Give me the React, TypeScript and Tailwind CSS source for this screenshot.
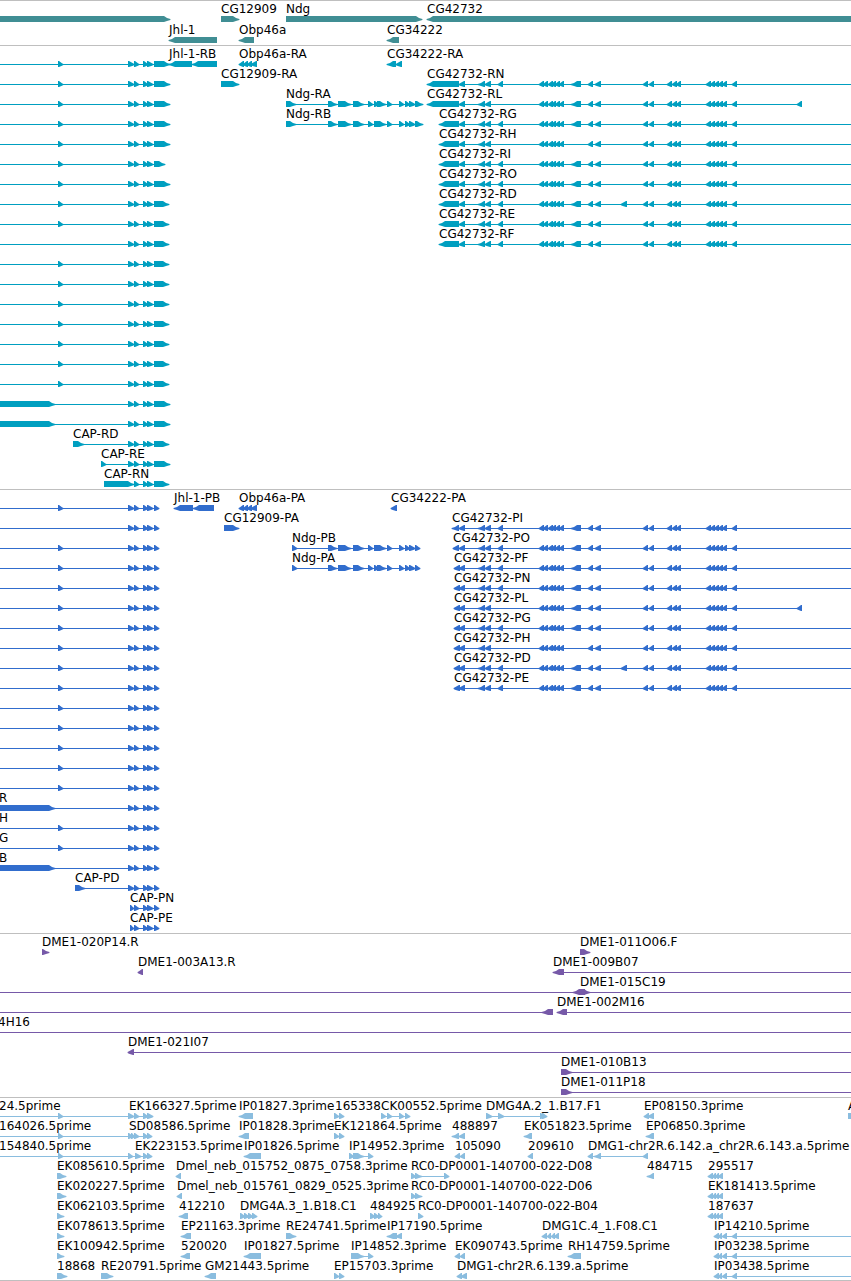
type Strand = '+' | '-';
type Span = [number, number];

interface Feature {
  strand: Strand;
  exons: Span[];
  line?: Span;
  label?: string;
  at?: number;
}

// Past the right border of the view; anything ending here runs on to the window's edge.
const FAR = 5000;

const fwd = (label: string, exons: Span[], line?: Span, at?: number): Feature => ({ strand: '+', label, exons, line, at });
const rev = (label: string, exons: Span[], line?: Span, at?: number): Feature => ({ strand: '-', label, exons, line, at });
const through = (exons: Span[]): Span => [exons[0][0], exons[exons.length - 1][1]];

/* ---------- CAP ---------- */
const capCore: Span[] = [[128, 134], [134, 139], [143, 148], [147, 153]];
const capUpstream: Span = [58, 63];

const capTranscript = (end: number, first: Span | null = capUpstream): Feature =>
  fwd('', [...(first ? [first] : []), ...capCore, [154, end]], [0, end]);
const capProtein = (first: Span | null = capUpstream, label = ''): Feature =>
  fwd(label, [...(first ? [first] : []), ...capCore, [154, 159]], [0, 159], -1);

/* ---------- CG42732 ---------- */
interface Variant {
  head: Span[];
  e498?: boolean;
  e571?: boolean;
  e621?: boolean;
  last?: boolean;
}
const cg42732 = (label: string, v: Variant): Feature => {
  const exons: Span[] = [
    ...v.head,
    [459, 465],
    [478, 485],
    [485, 491],
    ...(v.e498 === false ? [] : ([[498, 503]] as Span[])),
    [539, 544], [543, 548], [548, 553], [551, 556], [555, 560], [559, 564],
    ...(v.e571 === false ? [] : ([[571, 581]] as Span[])),
    [588, 593],
    [595, 601],
    ...(v.e621 ? ([[621, 627]] as Span[]) : []),
    [643, 648], [649, 654],
    [667, 672], [672, 677], [676, 681],
    [706, 711], [710, 715], [714, 719], [718, 723], [722, 727],
    [732, 737],
    ...(v.last ? ([[797, 802]] as Span[]) : []),
  ];
  return rev(label, exons, [v.head[0][0], v.last ? 802 : FAR]);
};
const long: Span[] = [[427, 459]];
const short: Span[] = [[439, 459]];
const coding: Span[] = [[454, 460]];

/* ---------- Ndg ---------- */
const ndg = (label: string, first: Span, split: boolean, end: number): Feature => {
  const exons: Span[] = [
    first,
    [328, 337], [338, 351], [353, 364], [368, 373],
    ...((split ? [[374, 379], [377, 386]] : [[374, 386]]) as Span[]),
    [387, 392], [399, 404], [405, 410], [409, 415], [415, end],
  ];
  return fwd(label, exons, through(exons));
};

const obp: Span[] = [[239, 244], [243, 248], [247, 252], [251, 257]];

const genes: Feature[][] = [
  [
    fwd('', [[-20, 170]]),
    fwd('CG12909', [[221, 239]]),
    fwd('Ndg', [[286, 422]]),
    rev('CG42732', [[427, FAR]]),
  ],
  [rev('Jhl-1', [[169, 217]]), rev('Obp46a', [[239, 254]]), rev('CG34222', [[387, 399]])],
];

const transcripts: Feature[][] = [
  [
    capTranscript(170),
    rev('Jhl-1-RB', [[169, 192], [192, 217]]),
    rev('Obp46a-RA', obp),
    rev('CG34222-RA', [[387, 396], [396, 402]]),
  ],
  [capTranscript(170), fwd('CG12909-RA', [[221, 239]]), cg42732('CG42732-RN', { head: long })],
  [capTranscript(170), ndg('Ndg-RA', [286, 296], true, 423), cg42732('CG42732-RL', { head: long, e498: false, last: true })],
  [capTranscript(170), ndg('Ndg-RB', [286, 296], false, 423), cg42732('CG42732-RG', { head: short })],
  [capTranscript(170), cg42732('CG42732-RH', { head: short, e498: false, e571: false })],
  [capTranscript(165), cg42732('CG42732-RI', { head: short })],
  [capTranscript(170), cg42732('CG42732-RO', { head: short })],
  [capTranscript(169), cg42732('CG42732-RD', { head: short, e621: true })],
  [capTranscript(169), cg42732('CG42732-RE', { head: short })],
  [capTranscript(169, null), cg42732('CG42732-RF', { head: short })],
  [capTranscript(169)],
  [capTranscript(169)],
  [capTranscript(169)],
  [capTranscript(169)],
  [capTranscript(169)],
  [capTranscript(169)],
  [capTranscript(169)],
  [capTranscript(170, [-20, 55])],
  [capTranscript(170, [-20, 55])],
  [fwd('CAP-RD', [[73, 84], ...capCore, [154, 169]], [73, 169])],
  [fwd('CAP-RE', [[101, 106], ...capCore, [154, 170]], [101, 170])],
  [fwd('CAP-RN', [[104, 134], ...capCore.slice(1), [154, 169]], [104, 169])],
];

const proteins: Feature[][] = [
  [
    capProtein(),
    rev('Jhl-1-PB', [[174, 193], [193, 214]]),
    rev('Obp46a-PA', obp),
    rev('CG34222-PA', [[391, 397]]),
  ],
  [capProtein(null), fwd('CG12909-PA', [[224, 239]]), cg42732('CG42732-PI', { head: [[452, 459]] })],
  [capProtein(), ndg('Ndg-PB', [292, 297], false, 420), cg42732('CG42732-PO', { head: [[453, 459]] })],
  [capProtein(), ndg('Ndg-PA', [292, 297], true, 420), cg42732('CG42732-PF', { head: coding })],
  [capProtein(), cg42732('CG42732-PN', { head: coding })],
  [capProtein(), cg42732('CG42732-PL', { head: coding, e498: false, last: true })],
  [capProtein(), cg42732('CG42732-PG', { head: coding })],
  [capProtein(), cg42732('CG42732-PH', { head: coding, e498: false, e571: false })],
  [capProtein(), cg42732('CG42732-PD', { head: coding, e621: true })],
  [capProtein(), cg42732('CG42732-PE', { head: coding })],
  [capProtein()],
  [capProtein()],
  [capProtein()],
  [capProtein()],
  [capProtein()],
  [capProtein([-20, 55], 'R')],
  [capProtein(capUpstream, 'H')],
  [capProtein(capUpstream, 'G')],
  [capProtein([-20, 55], 'B')],
  [fwd('CAP-PD', [[75, 85], ...capCore, [154, 159]], [75, 159])],
  [fwd('CAP-PN', [[130, 134], ...capCore.slice(1), [154, 159]], [130, 159])],
  [fwd('CAP-PE', [[130, 134], ...capCore.slice(1), [154, 159]], [130, 159])],
];

const clones: Feature[][] = [
  [fwd('DME1-020P14.R', [[42, 49]]), fwd('DME1-011O06.F', [[580, 590]])],
  [rev('DME1-003A13.R', [[138, 143]]), rev('DME1-009B07', [[553, 564]], [553, FAR])],
  [rev('', [[573, 585]], [0, 585]), fwd('DME1-015C19', [[580, 590]], [580, FAR])],
  [rev('', [[542, 553]], [0, 553]), rev('DME1-002M16', [[557, 567]], [557, FAR])],
  [fwd('4H16', [], [0, FAR], -2)],
  [rev('DME1-021I07', [[128, 134]], [128, FAR])],
  [fwd('DME1-010B13', [[561, 572]], [561, FAR])],
  [fwd('DME1-011P18', [[561, 572]], [561, FAR])],
];

const estPair: Span[] = [[334, 339], [339, 344]];
const est455: Span[] = [[455, 460], [460, 465]];
const est708: Span[] = [[708, 713], [712, 716], [715, 719], [718, 723]];
const est714: Span[] = [[714, 719], [718, 722], [722, 727], [732, 737]];
const est57: Span[] = [[57, 64]];

const ests: Feature[][] = [
  [
    fwd('24.5prime', [capUpstream], [0, 128], -1),
    fwd('EK166327.5prime', capCore, [128, 152], 129),
    rev('IP01827.3prime', [[239, 253]]),
    fwd('165338', estPair, undefined, 335),
    fwd('CK00552.5prime', [[381, 386], [387, 392], [399, 404], [405, 410]], [381, 410]),
    fwd('DMG4A.2_1.B17.F1', [[486, 492], [498, 504], [540, 545], [542, 547]], [486, 547]),
    rev('EP08150.3prime', [[644, 649], [648, 654]]),
    fwd('A', [[848, FAR]]),
  ],
  [
    fwd('164026.5prime', [capUpstream], [0, 128], -1),
    fwd('SD08586.5prime', [[128, 133], [131, 135], [134, 139], [143, 148], [147, 152]], [128, 152], 129),
    rev('IP01828.3prime', [[239, 249]]),
    fwd('EK121864.5prime', estPair),
    rev('488897', [[452, 459], [459, 465]]),
    rev('EK051823.5prime', [[524, 532]]),
    rev('EP06850.3prime', [[646, 654]]),
  ],
  [
    fwd('154840.5prime', [capUpstream, [128, 133]], [0, 135], -1),
    fwd('EK223153.5prime', [[135, 141], [143, 148], [147, 152]], [135, 152]),
    rev('IP01826.5prime', [[244, 261]]),
    fwd('IP14952.3prime', [[349, 354], [353, 364], [368, 373]], [349, 373]),
    rev('105090', est455),
    rev('209610', [[528, 533]]),
    rev('DMG1-chr2R.6.142.a_chr2R.6.143.a.5prime', [[588, 593], [594, 601], [643, 648]], [588, 648]),
  ],
  [
    fwd('EK085610.5prime', [[57, 66]]),
    rev('Dmel_neb_015752_0875_0758.3prime', [[176, 181]]),
    fwd('RC0-DP0001-140700-022-D08', [[411, 416], [415, 422], [444, 449]], [411, 449]),
    rev('484715', [[647, 654]]),
    rev('295517', est708),
  ],
  [
    fwd('EK020227.5prime', [[57, 66]]),
    rev('Dmel_neb_015761_0829_0525.3prime', [[177, 182]]),
    fwd('RC0-DP0001-140700-022-D06', [[411, 416], [415, 422]]),
    rev('EK181413.5prime', est708),
  ],
  [
    fwd('EK062103.5prime', est57),
    rev('412210', [[179, 188]]),
    fwd('DMG4A.3_1.B18.C1', [[240, 245], [244, 249], [248, 253], [252, 257]]),
    fwd('484925', [[370, 375], [374, 379], [378, 382]]),
    fwd('RC0-DP0001-140700-022-B04', [[418, 423]]),
    rev('187637', est708),
  ],
  [
    fwd('EK078613.5prime', est57),
    rev('EP21163.3prime', [[181, 191]]),
    fwd('RE24741.5prime', [[286, 296]]),
    rev('IP17190.5prime', [[387, 397], [396, 402]]),
    rev('DMG1C.4_1.F08.C1', [[542, 547], [547, 551], [551, 555], [554, 559]]),
    rev('IP14210.5prime', est714, [714, FAR]),
  ],
  [
    fwd('EK100942.5prime', est57),
    rev('520020', [[181, 190]]),
    rev('IP01827.5prime', [[244, 261]]),
    fwd('IP14852.3prime', [[351, 364], [368, 373]], [351, 373]),
    rev('EK090743.5prime', est455),
    rev('RH14759.5prime', [[568, 581]]),
    rev('IP03238.5prime', est714, [714, FAR]),
  ],
  [
    fwd('18868', [[57, 67]]),
    fwd('RE20791.5prime', [[101, 113]]),
    rev('GM21443.5prime', [[205, 216]]),
    fwd('EP15703.3prime', estPair),
    rev('DMG1-chr2R.6.139.a.5prime', [[457, 462], [461, 467]]),
    rev('IP03438.5prime', est714, [714, FAR]),
  ],
];

/* A block with its tip on the side the strand points to; narrow ones are all tip. */
function exonPoints([a, b]: Span, strand: Strand): string {
  const w = b - a;
  const narrow = w <= 6;
  const dir = strand === '+' ? 1 : -1;
  const base = strand === '+' ? a : b;
  const tip = strand === '+' ? b : a;
  const neck = narrow ? base + dir : tip - dir * 6;
  const nose = tip - dir * (narrow ? 1 : 3);
  const bulge = narrow ? 1.2 : 1.6;
  const end = tip + dir * 0.4;
  const pts: Span[] = [
    [base, 13],
    [neck, 13],
    [nose, 16.5 - bulge],
    [end, 16],
    [end, 17],
    [nose, 16.5 + bulge],
    [neck, 19],
    [base, 19],
  ];
  return pts.map((p) => p.join(',')).join(' ');
}

function Row({ features, height }: { features: Feature[]; height: string }) {
  return (
    <li className={`relative ${height}`}>
      <svg className="block h-full w-full" aria-hidden="true">
        {features.map((f, i) => (
          <g key={i} fill="currentColor">
            {f.line && <rect x={f.line[0]} y={16} width={f.line[1] - f.line[0]} height={1} />}
            {f.exons.map((e, j) => (
              <polygon key={j} points={exonPoints(e, f.strand)} />
            ))}
          </g>
        ))}
      </svg>
      {features
        .filter((f) => f.label)
        .map((f, i) => (
          <span
            key={i}
            className="absolute top-0 whitespace-nowrap text-xs leading-3 text-black"
            style={{ left: f.at ?? f.exons[0][0] }}
          >
            {f.label}
          </span>
        ))}
    </li>
  );
}

interface TrackProps {
  name: string;
  rows: Feature[][];
  className: string;
  rowHeight?: string;
}

function Track({ name, rows, className, rowHeight = 'h-5' }: TrackProps) {
  return (
    <section aria-label={name} className={`border-t border-[#bfbfbf] pt-0.5 ${className}`}>
      <ul>
        {rows.map((features, i) => (
          <Row key={i} features={features} height={rowHeight} />
        ))}
      </ul>
    </section>
  );
}

export default function App() {
  return (
    <main className="w-full overflow-hidden bg-white font-['DejaVu_Sans',sans-serif]">
      <Track name="Genes" rows={genes} className="text-[#408e94]" rowHeight="h-[21px]" />
      <Track name="Transcripts" rows={transcripts} className="pb-px text-[#009fc0]" />
      <Track name="Proteins" rows={proteins} className="pb-px text-[#316dcd]" />
      <Track name="Clones" rows={clones} className="pb-px text-[#7659a8]" />
      <Track name="ESTs" rows={ests} className="border-b text-[#8abddf]" />
    </main>
  );
}
